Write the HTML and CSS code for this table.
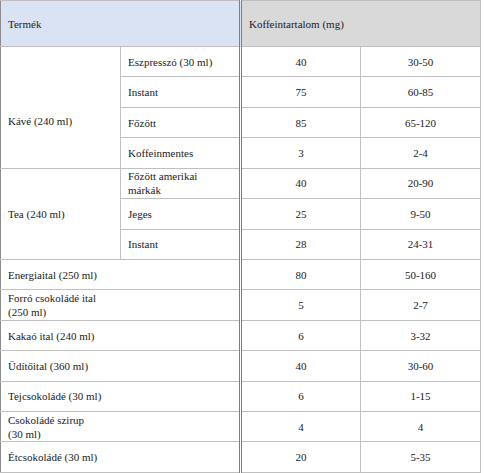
FILE: index.html
```html
<!DOCTYPE html>
<html lang="hu">
<head>
<meta charset="utf-8">
<title>Koffeintartalom</title>
<link rel="stylesheet" href="styles.css">
</head>
<body>
<table class="caf">
  <colgroup>
    <col class="c1"><col class="c2"><col class="c3"><col class="c4">
  </colgroup>
  <thead>
    <tr class="head">
      <th colspan="2" class="h-prod">Termék</th>
      <th colspan="2" class="h-caf">Koffeintartalom (mg)</th>
    </tr>
  </thead>
  <tbody>
    <tr><td rowspan="4" class="grp grp-kave">Kávé (240 ml)</td><td class="sub">Eszpresszó (30 ml)</td><td class="v v1">40</td><td class="v">30-50</td></tr>
    <tr><td class="sub">Instant</td><td class="v v1">75</td><td class="v">60-85</td></tr>
    <tr><td class="sub">Főzött</td><td class="v v1">85</td><td class="v">65-120</td></tr>
    <tr><td class="sub">Koffeinmentes</td><td class="v v1">3</td><td class="v">2-4</td></tr>
    <tr><td rowspan="3" class="grp">Tea (240 ml)</td><td class="sub two">Főzött amerikai<br>márkák</td><td class="v v1">40</td><td class="v">20-90</td></tr>
    <tr><td class="sub">Jeges</td><td class="v v1">25</td><td class="v">9-50</td></tr>
    <tr><td class="sub">Instant</td><td class="v v1">28</td><td class="v">24-31</td></tr>
    <tr><td colspan="2" class="sub wide">Energiaital (250 ml)</td><td class="v v1">80</td><td class="v">50-160</td></tr>
    <tr><td colspan="2" class="sub wide two">Forró csokoládé ital<br>(250 ml)</td><td class="v v1">5</td><td class="v">2-7</td></tr>
    <tr><td colspan="2" class="sub wide">Kakaó ital (240 ml)</td><td class="v v1">6</td><td class="v">3-32</td></tr>
    <tr><td colspan="2" class="sub wide">Üdítőital (360 ml)</td><td class="v v1">40</td><td class="v">30-60</td></tr>
    <tr><td colspan="2" class="sub wide">Tejcsokoládé (30 ml)</td><td class="v v1">6</td><td class="v">1-15</td></tr>
    <tr><td colspan="2" class="sub wide two">Csokoládé szirup<br>(30 ml)</td><td class="v v1">4</td><td class="v">4</td></tr>
    <tr><td colspan="2" class="sub wide">Étcsokoládé (30 ml)</td><td class="v v1">20</td><td class="v">5-35</td></tr>
  </tbody>
</table>
</body>
</html>
```

FILE: styles.css
```css
html, body {
  margin: 0;
  padding: 0;
  background: #ffffff;
  font-family: "Times New Roman", Times, "Liberation Serif", "DejaVu Serif", "Noto Serif", serif;
}

.caf {
  border-collapse: collapse;
  table-layout: fixed;
  width: 480px;
  font-family: "Times New Roman", Times, "Liberation Serif", "DejaVu Serif", "Noto Serif", serif;
  font-size: 11px;
  color: #1a1a1a;
}

.c1 { width: 120px; }
.c2 { width: 120px; }
.c3 { width: 120px; }
.c4 { width: 120px; }

.caf th,
.caf td {
  font-family: "Times New Roman", Times, "Liberation Serif", "DejaVu Serif", "Noto Serif", serif;
  font-size: 11px;
  border: 1px solid #bfbfbf;
  padding: 0 7px;
  line-height: 14px;
  vertical-align: middle;
  font-weight: normal;
  text-align: left;
}

.caf tr {
  height: 30.43px;
}

.caf tr.head {
  height: 46px;
}

.caf tr > :first-child {
  border-left: 1px solid #8c8c8c;
}

.h-prod {
  background: #dae3f3;
  border-right: 3px double #7f7f7f !important;
}

.h-caf {
  background: #d9d9d9;
}

.v1 {
  border-left: 3px double #7f7f7f !important;
}

.v {
  text-align: center !important;
}

.grp-kave {
  padding-top: 28px !important;
}
```
